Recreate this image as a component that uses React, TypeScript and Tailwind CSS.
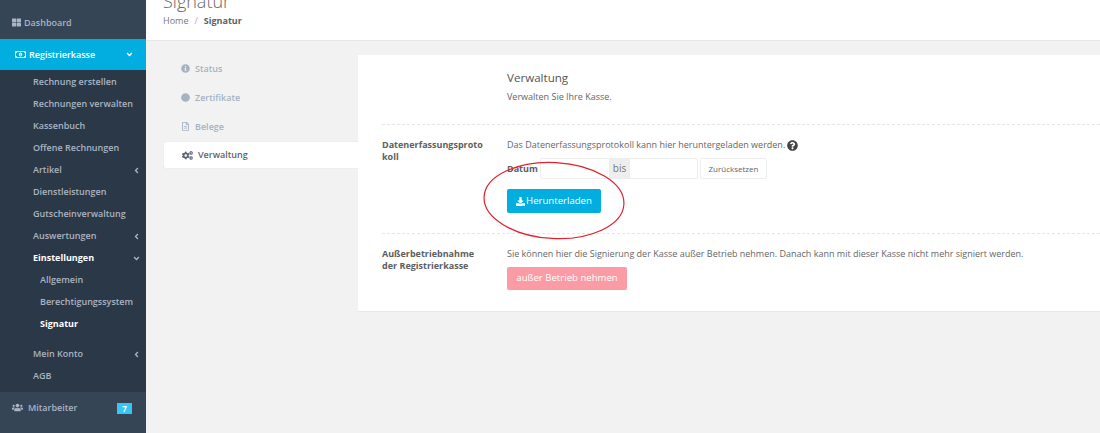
import { FaThLarge, FaRegMoneyBillAlt, FaInfoCircle, FaCircle, FaRegFileAlt, FaCogs, FaUsers, FaDownload, FaQuestionCircle, FaAngleDown, FaAngleLeft } from 'react-icons/fa';

const menu = [
  { label: 'Rechnung erstellen' },
  { label: 'Rechnungen verwalten' },
  { label: 'Kassenbuch' },
  { label: 'Offene Rechnungen' },
  { label: 'Artikel', arrow: true },
  { label: 'Dienstleistungen' },
  { label: 'Gutscheinverwaltung' },
  { label: 'Auswertungen', arrow: true },
];

const tabs = [
  { icon: FaInfoCircle, label: 'Status' },
  { icon: FaCircle, label: 'Zertifikate' },
  { icon: FaRegFileAlt, label: 'Belege' },
];

function MenuItem({ label, arrow }: { label: string; arrow?: boolean }) {
  return (
    <div className="flex h-[22px] items-center justify-between pl-[33px] pr-[5px] text-[#aab4c2]">
      <span>{label}</span>
      {arrow && <FaAngleLeft className="text-[9px]" />}
    </div>
  );
}

function SubItem({ label, active }: { label: string; active?: boolean }) {
  return (
    <div className={`flex h-[22px] items-center pl-[40px] ${active ? 'font-bold text-white' : 'text-[#aab4c2]'}`}>
      {label}
    </div>
  );
}

export default function App() {
  return (
    <div className="relative flex h-[433px] w-[1100px] overflow-hidden bg-[#f2f2f2] font-['Open_Sans',sans-serif] text-[9px] font-semibold">
      {/* Sidebar */}
      <aside className="flex w-[146px] shrink-0 flex-col bg-[#2b3848]">
        <div className="flex h-[39px] items-center gap-[3px] bg-[#364556] pl-[12px] pt-[6px] text-[#aab4c2]">
          <FaThLarge className="text-[9px]" />
          <span>Dashboard</span>
        </div>
        <div className="flex h-[31px] items-center justify-between bg-[#02aee0] pl-[15px] pr-[12px] text-white">
          <span className="flex items-center gap-[3px]">
            <FaRegMoneyBillAlt className="text-[11px]" />
            Registrierkasse
          </span>
          <FaAngleDown className="text-[9px]" />
        </div>
        <div className="mt-[1px]">
          {menu.map((item) => (
            <MenuItem key={item.label} label={item.label} arrow={item.arrow} />
          ))}
          <div className="flex h-[22px] items-center justify-between pl-[33px] pr-[5px] font-bold text-white">
            <span>Einstellungen</span>
            <FaAngleDown className="text-[9px] text-[#aab4c2]" />
          </div>
          <SubItem label="Allgemein" />
          <SubItem label="Berechtigungssystem" />
          <SubItem label="Signatur" active />
          <div className="mt-[8px]">
            <MenuItem label="Mein Konto" arrow />
            <MenuItem label="AGB" />
          </div>
        </div>
        <div className="mt-[5px] flex flex-1 items-start justify-between bg-[#364556] pl-[12px] pr-[14px] pt-[9px] text-[#aab4c2]">
          <span className="flex items-center gap-[5px]">
            <FaUsers className="text-[11px]" />
            Mitarbeiter
          </span>
          <span className="mt-[2px] flex h-[11px] w-[15px] items-center justify-center bg-[#36c6f4] text-[8px] font-bold text-white">7</span>
        </div>
      </aside>

      {/* Main */}
      <main className="min-w-0 flex-1">
        <header className="h-[41px] overflow-hidden border-b border-[#e7e7e7] bg-white pl-[17px]">
          <h1 className="-mt-[13px] h-[29px] text-[18px] leading-[29px] font-light text-[#666]">Signatur</h1>
          <div className="-mt-[2px] flex items-center text-[9px] leading-[14px] font-normal text-[#777]">
            <span>Home</span>
            <span className="mx-[6px] text-[#aaa]">/</span>
            <span className="font-bold text-[#5e5e5e]">Signatur</span>
          </div>
        </header>

        <div className="flex pl-[17px] pt-[14px]">
          <nav className="-mt-[1px] w-[195px] shrink-0">
            {tabs.map((t) => (
              <div key={t.label} className="flex h-[29px] items-center gap-[5px] pl-[18px] text-[#a6b2c1]">
                <t.icon className="text-[9px]" />
                <span>{t.label}</span>
              </div>
            ))}
            <div className="flex h-[28px] items-center gap-[5px] rounded-l-[3px] border-y border-l border-[#eee] bg-white pl-[18px] text-[#5b6472]">
              <FaCogs className="text-[11px]" />
              <span>Verwaltung</span>
            </div>
          </nav>

          <section className="h-[257px] flex-1 border-b border-[#e8e8e8] bg-white pl-[24px] font-normal text-[#666]">
            <div className="pl-[125px] pt-[15px]">
              <h2 className="text-[11.6px] leading-[16px] font-normal text-[#555]">Verwaltung</h2>
              <p className="mt-[4px] leading-[14px]">Verwalten Sie Ihre Kasse.</p>
            </div>

            <div className="mt-[20px] flex border-t border-dashed border-[#e6e6e6] pt-[13px]">
              <div className="mr-[20px] w-[105px] shrink-0 break-all pt-[1px] leading-[12px] font-bold text-[#5e5e5e]">
                Datenerfassungsprotokoll
              </div>
              <div>
                <p className="flex items-center gap-[2px] leading-[14px]">
                  Das Datenerfassungsprotokoll kann hier heruntergeladen werden.
                  <FaQuestionCircle className="text-[11px] text-[#444]" />
                </p>
                <div className="mt-[6px] flex items-center">
                  <span className="w-[33px] font-bold text-[#5e5e5e]">Datum</span>
                  <div className="flex h-[21px] w-[158px] rounded-[2px] border border-[#eee]">
                    <div className="w-[68px]" />
                    <div className="flex w-[21px] items-center justify-center bg-[#eee] text-[10px] text-[#777]">bis</div>
                  </div>
                  <button className="ml-[2px] h-[21px] w-[67px] rounded-[2px] border border-[#eee] text-[8px] text-[#666]">Zurücksetzen</button>
                </div>
                <button className="mt-[10px] flex h-[24px] w-[94px] items-center justify-center gap-[1px] rounded-[2px] bg-[#02aee0] text-[9.6px] text-white">
                  <FaDownload className="text-[9px]" />
                  Herunterladen
                </button>
              </div>
            </div>

            <div className="mt-[20px] flex border-t border-dashed border-[#e6e6e6] pt-[13px]">
              <div className="mr-[20px] w-[105px] shrink-0 pt-[1px] leading-[12px] font-bold text-[#5e5e5e]">
                Außerbetriebnahme der Registrierkasse
              </div>
              <div>
                <p className="leading-[14px]">
                  Sie können hier die Signierung der Kasse außer Betrieb nehmen. Danach kann mit dieser Kasse nicht mehr signiert werden.
                </p>
                <button className="mt-[6px] h-[23px] w-[120px] rounded-[2px] bg-[#fb9ba5] text-[9.6px] text-white">außer Betrieb nehmen</button>
              </div>
            </div>
          </section>
        </div>
      </main>

      {/* Red annotation drawn on the screenshot */}
      <svg className="absolute left-[480px] top-[158px]" width="148" height="85" viewBox="0 0 148 85" fill="none">
        <ellipse cx="74" cy="42.5" rx="70" ry="38" stroke="#e0202c" strokeWidth="1.2" transform="rotate(3 74 42.5)" />
      </svg>
    </div>
  );
}
